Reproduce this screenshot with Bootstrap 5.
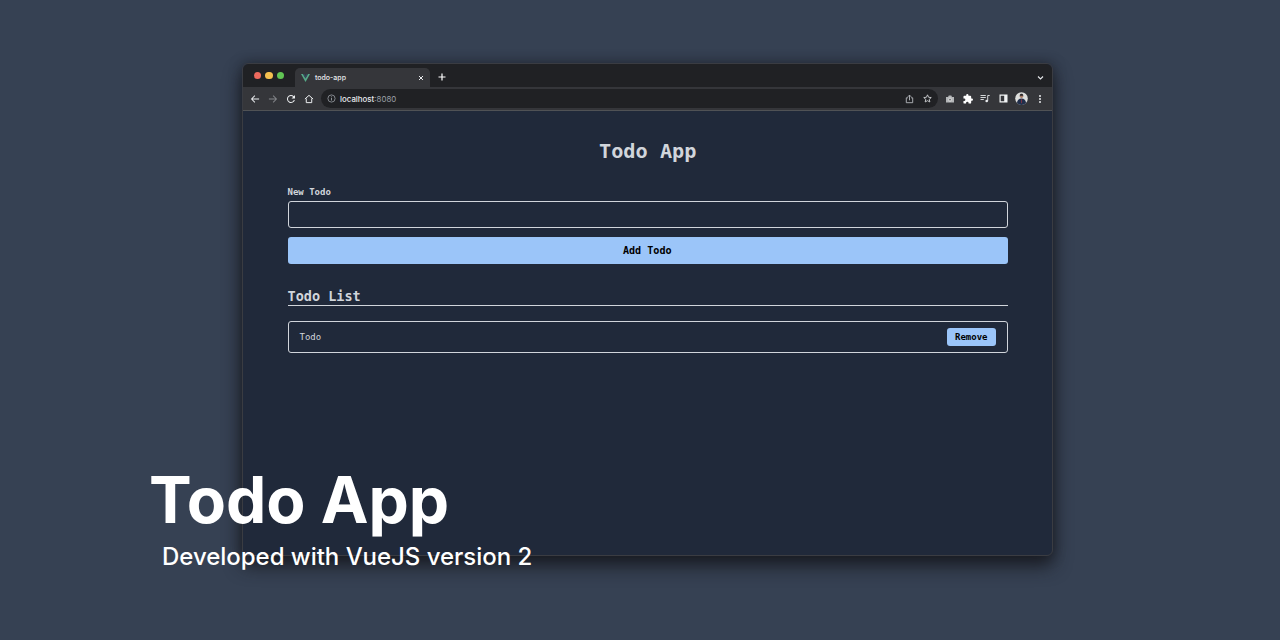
<!DOCTYPE html>
<html lang="en">
<head>
<meta charset="utf-8">
<meta name="viewport" content="width=device-width, initial-scale=1">
<title>Todo App</title>
<link href="https://cdn.jsdelivr.net/npm/bootstrap@5.3.0/dist/css/bootstrap.min.css" rel="stylesheet">
<style>
body{background:#364153;height:640px;overflow:hidden;font-family:Inter,sans-serif;padding:63px 227px 0 242px}
.browser{height:493px;border:1px solid #3a3c42;border-radius:6px;background:#20293a;box-shadow:0 10px 18px rgba(22,24,29,.85),0 0 12px rgba(20,22,28,.5)}
.tabstrip{height:23px;background:#202124}
.lights{gap:3.9px;padding:0 0 0 11px;width:52px}
.light{width:7.4px;height:7.4px}
.tab-item{width:135px;height:19px;background:#35363a;border-radius:5px 5px 0 0;padding:0 6px 0 6px;color:#e8eaed;font-size:7px;font-weight:500;line-height:19px}
.toolbar{height:24px;background:#35363a;border-bottom:1px solid #505255;padding:0 8px 0 7px}
.omnibox{height:19px;width:617px;margin-left:7px;border-radius:10px;background:#202124;padding:0 6px;font-size:7.9px;line-height:20px;color:#e8eaed}
.host{font-weight:500}
.port{color:#9aa0a6;font-weight:400}
svg{display:block;flex:none}
.page{font-family:"DejaVu Sans Mono","Liberation Mono",monospace;color:#d1d5db;padding:27px 44px 0 44.5px}
.page h1{font-size:20.25px;line-height:27px;font-weight:700}
.page h2{font-size:13.5px;line-height:18px;font-weight:700;border-bottom:1.3px solid #d1d5db}
.page label{font-size:9px;line-height:13px;font-weight:700}
.entry{height:27px;background:transparent;border:1.2px solid #d1d5db;border-radius:3px}
.add{height:27px;font-size:10.125px;line-height:1;font-weight:700;background:#9bc5f9;border:0;border-radius:3px;color:#000;padding:2px 1px 0 0}
.todo{height:32px;border:1.2px solid #d1d5db;border-radius:3px;padding:0 11.5px 0 11px;font-size:9px}
.remove{width:48.5px;height:18px;padding:2px 0 0;font-size:9px;line-height:1;font-weight:700;background:#9bc5f9;border:0;border-radius:3px;color:#000}
.caption-title{left:149px;top:461px;font-size:64px;line-height:78px;font-weight:700;color:#fff;white-space:nowrap}
.caption-text{left:162px;top:542px;font-size:24px;line-height:29px;font-weight:500;letter-spacing:-.03px;color:#fff;white-space:nowrap}
</style>
</head>
<body class="position-relative">
<main class="browser overflow-visible">
  <div class="tabstrip d-flex rounded-top">
    <div class="lights d-flex align-items-center">
      <span class="light rounded-circle" style="background:#ed6a5e"></span>
      <span class="light rounded-circle" style="background:#f4bf4f"></span>
      <span class="light rounded-circle" style="background:#61c554"></span>
    </div>
    <div class="tab-item d-flex align-items-center align-self-end">
      <svg width="9" height="8" viewBox="0 0 18 16"><path fill="#56a987" d="M0 0h4l5 9 5-9h4L9 16z"/><path fill="#35495e" d="M4 0h3l2 4 2-4h3L9 9z"/></svg>
      <span style="margin-left:5px">todo-app</span>
      <svg class="ms-auto" width="6" height="6" viewBox="0 0 6 6"><path d="M1 1l4 4M5 1L1 5" stroke="#e8eaed" stroke-width="1"/></svg>
    </div>
    <svg class="align-self-center ms-2" style="margin-top:3px" width="8" height="8" viewBox="0 0 8 8"><path d="M4 .5v7M.5 4h7" stroke="#fff" stroke-width="1.2"/></svg>
    <svg class="ms-auto align-self-center" style="margin-right:8.5px;margin-top:4px" width="7" height="6" viewBox="0 0 7 6"><path d="M1 1.5L3.5 4 6 1.5" fill="none" stroke="#e8eaed" stroke-width="1.1"/></svg>
  </div>
  <div class="toolbar d-flex align-items-center">
    <div class="d-flex align-items-center" style="gap:8px">
      <svg width="10" height="10" viewBox="1 1 22 22" fill="#eceef0"><path d="M21 11H6.8l5.6-5.6L11 4l-8 8 8 8 1.4-1.4L6.8 13H21z"/></svg>
      <svg width="10" height="10" viewBox="1 1 22 22" fill="#85878b"><path d="M3 11h14.2l-5.6-5.6L13 4l8 8-8 8-1.4-1.4 5.6-5.6H3z"/></svg>
      <svg width="10" height="10" viewBox="2 2 20 20" fill="#eceef0"><path d="M17.65 6.35A8 8 0 1 0 19.73 14h-2.08A6 6 0 1 1 12 6c1.66 0 3.14.69 4.22 1.78L13 11h7V4z"/></svg>
      <svg width="10" height="10" viewBox="1 2 22 20"><path d="M3 12l9-8 9 8M6 11v9h12v-9" fill="none" stroke="#eceef0" stroke-width="2.2"/></svg>
    </div>
    <div class="omnibox d-flex align-items-center">
      <svg width="9" height="9" viewBox="0 0 9 9"><circle cx="4.5" cy="4.5" r="3.6" fill="none" stroke="#9aa0a6" stroke-width=".8"/><path d="M4.5 4v2.5M4.5 2.4v.9" stroke="#9aa0a6" stroke-width=".9"/></svg>
      <span style="margin-left:4px"><span class="host">localhost</span><span class="port">:8080</span></span>
      <svg class="ms-auto" width="9" height="10" viewBox="0 0 9 10" fill="none" stroke="#b6b9be" stroke-width=".9"><path d="M3 3.8H1.3v4.9h6.4V3.8H6M4.5 6.3V1.2M2.8 2.8l1.7-1.7 1.7 1.7"/></svg>
      <svg style="margin-left:9px" width="9" height="9" viewBox="1 1 22 22"><path d="M12 3l2.7 6 6.5.7-4.9 4.4 1.4 6.4L12 17.3l-5.7 3.2 1.4-6.4-4.9-4.4L9.3 9z" fill="none" stroke="#cfd1d4" stroke-width="2.2"/></svg>
    </div>
    <div class="d-flex align-items-center justify-content-between ms-auto" style="width:99px">
      <svg width="10" height="10" viewBox="0 0 10 10"><path fill="#b4b6b8" d="M1 3h2l.8-1.4h2.5L7 3h2v5.5H1z"/><circle cx="5" cy="5.6" r="1.5" fill="#77797c" stroke="#f4f4f4" stroke-width=".7"/></svg>
      <svg width="10" height="10" viewBox="1 1 22 22" fill="#fff"><path d="M20.5 11H19V7a2 2 0 0 0-2-2h-4V3.500a2.500 2.500 0 0 0-5 0V5H4a2 2 0 0 0-2 2v3.800h1.500a2.700 2.700 0 0 1 0 5.400H2V20c0 1.100.9 2 2 2h3.800v-1.500a2.700 2.700 0 0 1 5.400 0V22H17a2 2 0 0 0 2-2v-4h1.500a2.500 2.500 0 0 0 0-5z"/></svg>
      <svg width="10" height="10" viewBox="0 0 10 10"><path d="M.5 1.5h5.3M.5 3.5h5.3M.5 5.5h3.3M7.700 7V1.500h2" fill="none" stroke="#d5d7d9" stroke-width="1"/><circle cx="6.7" cy="7" r="1.3" fill="#e8eaed"/></svg>
      <svg style="margin-left:1px" width="9" height="9" viewBox="0 0 9 9"><path fill="#f1f3f4" fill-rule="evenodd" d="M.5.5h8v8h-8zM1.700 1.700v5.600h3.500V1.700z"/></svg>
      <svg width="13" height="13" viewBox="0 0 13 13"><circle cx="6.5" cy="6.5" r="6.3" fill="#dedfdd"/><path d="M2 11c0-3 2-4.500 4.500-4.500S11 8 11 11a6.300 6.300 0 0 1-9 0" fill="#202e4a"/><circle cx="6.5" cy="4.2" r="1.7" fill="#a77b66"/><path d="M4.700 3.700c0-2.500 3.600-2.500 3.600 0z" fill="#282628"/><path d="M6.500 7.200v4" stroke="#8d3541" stroke-width=".8"/></svg>
      <svg width="8" height="10" viewBox="0 0 8 10" fill="#e8eaed"><circle cx="4" cy="2" r="1"/><circle cx="4" cy="5" r="1"/><circle cx="4" cy="8" r="1"/></svg>
    </div>
  </div>
  <div class="page">
    <h1 class="text-center mb-0">Todo App</h1>
    <form style="margin-top:21px">
      <label class="d-block" for="new-todo">New Todo</label>
      <input id="new-todo" class="entry d-block w-100" style="margin-top:2px" type="text">
      <button class="add btn d-block w-100" style="margin-top:9px" type="button">Add Todo</button>
    </form>
    <h2 class="mb-0" style="margin-top:22.5px">Todo List</h2>
    <div class="todo d-flex align-items-center justify-content-between" style="margin-top:15.2px">
      <span style="padding-top:2px">Todo</span>
      <button class="remove btn" type="button">Remove</button>
    </div>
  </div>
</main>
<div class="caption-title position-absolute">Todo App</div>
<div class="caption-text position-absolute">Developed with VueJS version 2</div>
<script src="https://cdn.jsdelivr.net/npm/bootstrap@5.3.0/dist/js/bootstrap.bundle.min.js"></script>
</body>
</html>
